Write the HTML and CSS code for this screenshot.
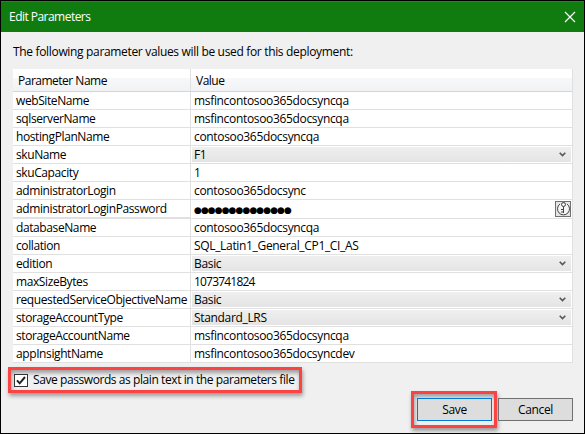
FILE: index.html
```
<!DOCTYPE html>
<html lang="en">
<head>
<meta charset="utf-8">
<title>Edit Parameters</title>
<link rel="stylesheet" href="styles.css">
</head>
<body>
<main class="dialog">
  <header class="titlebar">
    <h1 class="title">Edit Parameters</h1>
    <svg class="close" width="12" height="12" viewBox="0 0 12 12"><path d="M1 1L11 11M11 1L1 11"/></svg>
  </header>
  <p class="intro"><span>The following parameter values will be used for this deployment:</span></p>
  <section class="grid">
    <div class="row head"><div class="name"><span>Parameter Name</span></div><div class="value"><span>Value</span></div></div>
    <div class="row"><div class="name"><span>webSiteName</span></div><div class="value"><span>msfincontosoo365docsyncqa</span></div></div>
    <div class="row"><div class="name"><span>sqlserverName</span></div><div class="value"><span>msfincontosoo365docsyncqa</span></div></div>
    <div class="row"><div class="name"><span>hostingPlanName</span></div><div class="value"><span>contosoo365docsyncqa</span></div></div>
    <div class="row"><div class="name"><span>skuName</span></div><div class="value combo"><span>F1</span><svg class="chevron" width="7" height="5" viewBox="0 0 7 5"><path d="M.7 .8L3.5 3.6L6.3 .8"/></svg></div></div>
    <div class="row"><div class="name"><span>skuCapacity</span></div><div class="value"><span>1</span></div></div>
    <div class="row"><div class="name"><span>administratorLogin</span></div><div class="value"><span>contosoo365docsync</span></div></div>
    <div class="row password"><div class="name"><span>administratorLoginPassword</span></div><div class="value"><span class="dots">●●●●●●●●●●●●●●</span>
      <svg class="key" width="16" height="16" viewBox="0 0 16 16"><rect class="key-box" x=".5" y=".5" width="15" height="15"/><path class="key-ring" d="M5 3A6 6 0 1 0 12 3"/><circle cx="8.5" cy="3.5" r="2"/><path d="M8.5 5.5V12M8.5 8.5H6M8.5 11H6"/></svg></div></div>
    <div class="row"><div class="name"><span>databaseName</span></div><div class="value"><span>contosoo365docsyncqa</span></div></div>
    <div class="row"><div class="name"><span>collation</span></div><div class="value"><span>SQL_Latin1_General_CP1_CI_AS</span></div></div>
    <div class="row"><div class="name"><span>edition</span></div><div class="value combo"><span>Basic</span><svg class="chevron" width="7" height="5" viewBox="0 0 7 5"><path d="M.7 .8L3.5 3.6L6.3 .8"/></svg></div></div>
    <div class="row"><div class="name"><span>maxSizeBytes</span></div><div class="value"><span class="digits">1073741824</span></div></div>
    <div class="row"><div class="name"><span>requestedServiceObjectiveName</span></div><div class="value combo"><span>Basic</span><svg class="chevron" width="7" height="5" viewBox="0 0 7 5"><path d="M.7 .8L3.5 3.6L6.3 .8"/></svg></div></div>
    <div class="row"><div class="name"><span>storageAccountType</span></div><div class="value combo"><span>Standard_LRS</span><svg class="chevron" width="7" height="5" viewBox="0 0 7 5"><path d="M.7 .8L3.5 3.6L6.3 .8"/></svg></div></div>
    <div class="row"><div class="name"><span>storageAccountName</span></div><div class="value"><span>msfincontosoo365docsyncqa</span></div></div>
    <div class="row"><div class="name"><span>appInsightName</span></div><div class="value"><span>msfincontosoo365docsyncdev</span></div></div>
  </section>
  <div class="option callout">
    <svg class="checkbox" width="14" height="13" viewBox="0 0 14 13"><rect x=".5" y=".5" width="13" height="12"/><path d="M3 6.3L5.7 9.3L11 3"/></svg>
    <span>Save passwords as plain text in the parameters file</span>
  </div>
  <footer class="actions">
    <div class="callout save-frame"><button class="button primary">Save</button></div>
    <button class="button">Cancel</button>
  </footer>
</main>
</body>
</html>
```
FILE: styles.css
```
* { box-sizing: border-box; }
body {
  margin: 0;
  font: 12px/16px "Open Sans", "Noto Sans", sans-serif;
  letter-spacing: -0.33px;
  color: #000;
}
.dialog {
  width: 585px;
  height: 434px;
  border: 1px solid #000;
  background: #f0f0f0;
  display: flex;
  flex-direction: column;
  overflow: hidden;
}
.titlebar {
  height: 31px;
  flex: none;
  background: #107c10;
  border-top: 1px solid #2f802f;
  display: flex;
  align-items: center;
  justify-content: space-between;
  padding: 0 8px;
  color: #fff;
}
.title { margin: 0; font-size: 12px; font-weight: 400; letter-spacing: -0.53px; }
.close { fill: none; stroke: #fff; stroke-width: 1.2; }
.intro { margin: 12px 0 0 12px; height: 25px; flex: none; white-space: nowrap; }
.grid { margin-left: 12px; width: 560px; flex: none; border-right: 1px solid #e0e0e0; }
.row { display: flex; height: 18px; line-height: 18px; background: #fff; border-bottom: 1px solid #e0e0e0; white-space: nowrap; }
.name { width: 178px; flex: none; padding-left: 3px; border-right: 1px solid #e0e0e0; letter-spacing: -0.4px; }
.value { flex: 1; padding-left: 3px; display: flex; }
.head {
  height: 23px;
  line-height: 24px;
  background: linear-gradient(#fff 0 9px, #f7f8fa 9px, #f1f2f4);
  border-color: #d5d5d5;
}
.head .name, .head .value { padding-left: 5px; letter-spacing: -0.5px; }
.combo {
  margin: 1px;
  padding-left: 2px;
  line-height: 16px;
  justify-content: space-between;
  background: linear-gradient(#efefef, #e4e4e4);
}
.digits { letter-spacing: -0.8px; }
.chevron { margin: 5px 5px 0 0; fill: none; stroke: #555; stroke-width: 1.6; }
.password { height: 19px; }
.password .name { border-bottom: 1px solid #e0e0e0; }
.password .value { justify-content: space-between; }
.dots { font: 9px/20px "DejaVu Sans", sans-serif; letter-spacing: -0.93px; }
.key { margin: 1px 1px 0 0; fill: none; stroke: #444; }
.key-box { fill: #e5e5e5; stroke: #707070; }
.key-ring { fill: #f4f4f4; }
.callout {
  border: 3px solid #fb4343;
  box-shadow: 1px 3px 4px rgba(0,0,0,.35), inset 1px 3px 4px rgba(0,0,0,.35);
}
.option {
  margin: 4px 0 0 7px;
  width: 294px;
  height: 26px;
  flex: none;
  display: flex;
  align-items: center;
  gap: 5px;
  padding-left: 3px;
  white-space: nowrap;
  letter-spacing: -0.42px;
}
.checkbox { flex: none; fill: #fff; stroke: #333; }
.checkbox path { fill: none; stroke: #222; stroke-width: 2; }
.actions { display: flex; justify-content: flex-end; align-items: center; gap: 1px; padding-right: 11px; height: 37px; margin-top: -2px; }
.save-frame { width: 86px; height: 37px; padding: 4px 2px 0 3px; }
.button {
  width: 75px;
  height: 23px;
  padding: 0;
  border: 1px solid #707070;
  background: #ddd;
  font: inherit;
  letter-spacing: inherit;
}
.primary { display: block; border-color: #0078d7; }
```
